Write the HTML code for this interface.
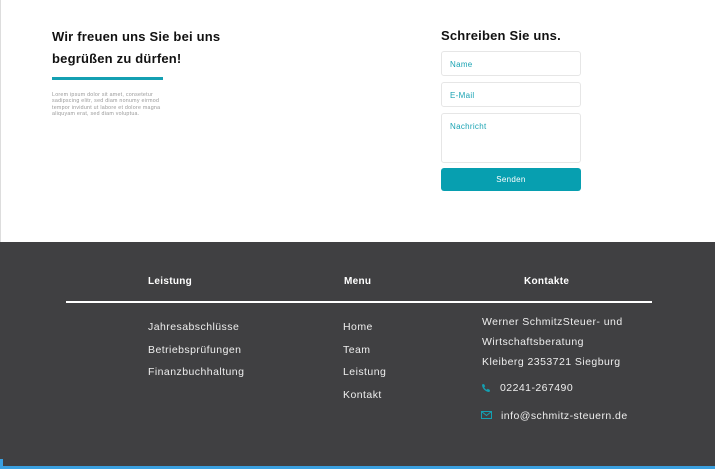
<!DOCTYPE html>
<html><head><style>
*{margin:0;padding:0;box-sizing:border-box}
body{width:715px;height:469px;overflow:hidden;background:#fff;font-family:"Liberation Sans",sans-serif;position:relative}
.abs{position:absolute}
h2{font-size:13px;font-weight:bold;color:#111;letter-spacing:0.2px}
.inp{position:absolute;left:441px;width:140px;border:1px solid #e6e6e6;border-radius:3px;font-size:8px;color:#1aa3b3;padding:8px 0 0 8px;letter-spacing:0.3px}
.foot{position:absolute;left:0;top:242px;width:715px;height:227px;background:#404042;color:#eee}
.ft{position:absolute;font-size:10.5px;letter-spacing:0.45px}
.fh{font-weight:bold;font-size:10px;color:#fff;letter-spacing:0.3px}
</style></head><body>
<div style="position:absolute;left:0;top:0;width:1px;height:242px;background:#ddd"></div>
<h2 class="abs" style="left:52px;top:26px;line-height:22px">Wir freuen uns Sie bei uns<br>begrüßen zu dürfen!</h2>
<div class="abs" style="left:52px;top:77px;width:111px;height:3px;background:#14a0b2"></div>
<div class="abs" style="left:52px;top:92px;font-size:5.3px;line-height:6.3px;color:#999;width:120px;letter-spacing:0.25px">Lorem ipsum dolor sit amet, consetetur sadipscing elitr, sed diam nonumy eirmod tempor invidunt ut labore et dolore magna aliquyam erat, sed diam voluptua.</div>
<h2 class="abs" style="left:441px;top:28px">Schreiben Sie uns.</h2>
<div class="inp" style="top:51px;height:25px">Name</div>
<div class="inp" style="top:82px;height:25px">E-Mail</div>
<div class="inp" style="top:113px;height:50px">Nachricht</div>
<div class="abs" style="left:441px;top:168px;width:140px;height:23px;background:#079fb0;border-radius:3px;color:#fff;font-size:8px;text-align:center;line-height:23px;letter-spacing:0.3px">Senden</div>
<div class="foot">
<div class="ft fh" style="left:148px;top:34px">Leistung</div>
<div class="ft fh" style="left:344px;top:34px">Menu</div>
<div class="ft fh" style="left:524px;top:34px">Kontakte</div>
<div class="abs" style="left:66px;top:59px;width:586px;height:2px;background:#fff"></div>
<div class="ft" style="left:148px;top:74px;line-height:22.5px">Jahresabschlüsse<br>Betriebsprüfungen<br>Finanzbuchhaltung</div>
<div class="ft" style="left:343px;top:74px;line-height:22.5px">Home<br>Team<br>Leistung<br>Kontakt</div>
<div class="ft" style="left:482px;top:70px;line-height:20px">Werner SchmitzSteuer- und<br>Wirtschaftsberatung<br>Kleiberg 2353721 Siegburg</div>
<svg class="abs" style="left:481px;top:141px" width="10" height="10" viewBox="0 0 10 10"><path d="M1 1.5L3 1l1.2 2.3-1 .9c.6 1.3 1.4 2.1 2.6 2.6l.9-1L9 7l-.5 2C4.5 9 1 5.5 1 1.5z" fill="#14a0b2"/></svg>
<div class="ft" style="left:500px;top:140px">02241-267490</div>
<svg class="abs" style="left:481px;top:169px" width="11" height="8" viewBox="0 0 11 8"><rect x=".5" y=".5" width="10" height="7" fill="none" stroke="#14a0b2"/><path d="M.5 .5L5.5 4.5 10.5 .5" fill="none" stroke="#14a0b2"/></svg>
<div class="ft" style="left:501px;top:168px">info@schmitz-steuern.de</div>
<div class="abs" style="left:0;top:224px;width:715px;height:3px;background:#3aa0e0"></div>
<div class="abs" style="left:0;top:217px;width:3px;height:10px;background:#3aa0e0"></div>
</div>
</body></html>
